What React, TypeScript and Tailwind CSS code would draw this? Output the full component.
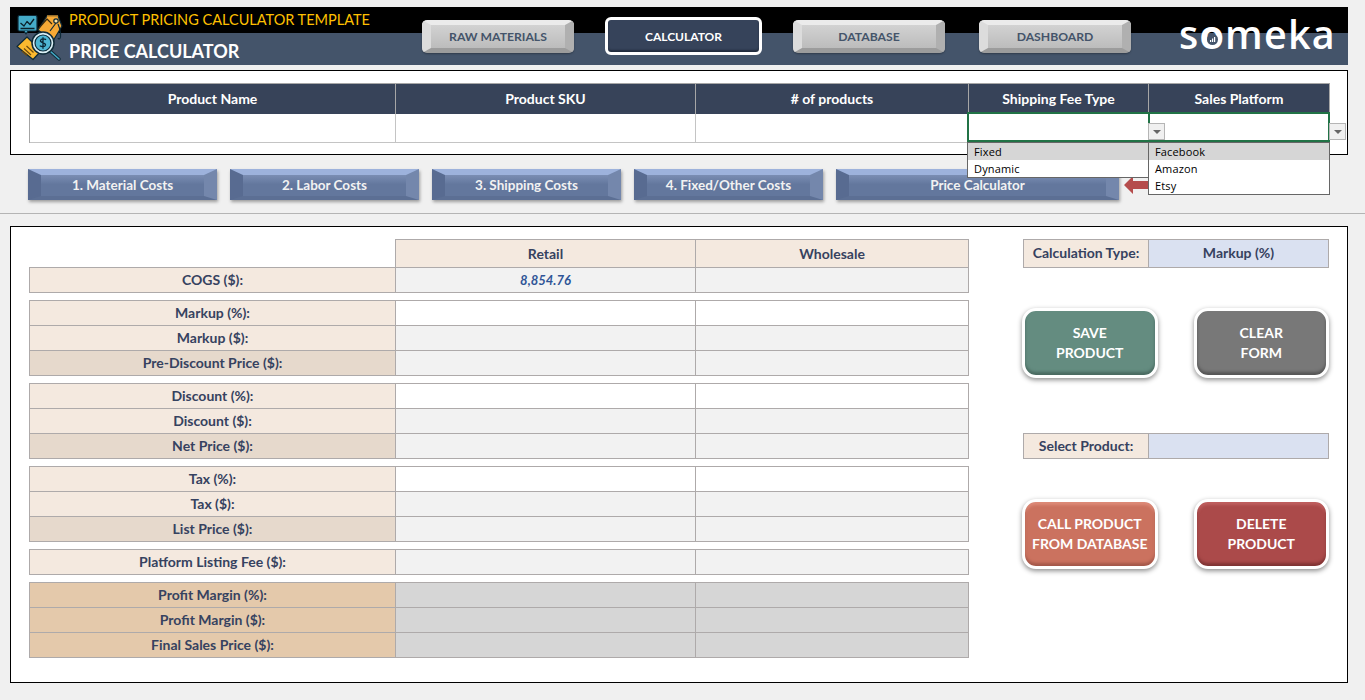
const NAV = [
  { label: "RAW MATERIALS", width: "w-[152px]" },
  { label: "CALCULATOR", active: true },
  { label: "DATABASE", width: "w-[152px]" },
  { label: "DASHBOARD", width: "w-[152px] ml-[3px]" },
];

const COST_BUTTONS = [
  { label: "1. Material Costs", width: "w-[189px]" },
  { label: "2. Labor Costs", width: "w-[189px]" },
  { label: "3. Shipping Costs", width: "w-[189px]" },
  { label: "4. Fixed/Other Costs", width: "w-[189px]" },
  { label: "Price Calculator", width: "w-[283px]" },
];

const TOP_COLUMNS = ["Product Name", "Product SKU", "# of products", "Shipping Fee Type", "Sales Platform"];

const GROUPS = [
  [
    { label: "Markup (%):", input: true },
    { label: "Markup ($):" },
    { label: "Pre-Discount Price ($):", dark: true },
  ],
  [
    { label: "Discount (%):", input: true },
    { label: "Discount ($):" },
    { label: "Net Price ($):", dark: true },
  ],
  [
    { label: "Tax (%):", input: true },
    { label: "Tax ($):" },
    { label: "List Price ($):", dark: true },
  ],
  [{ label: "Platform Listing Fee ($):" }],
];

function PriceIcon() {
  return (
    <svg width="50" height="48" viewBox="14 12 50 48" fill="none" stroke="#0e2a38" strokeWidth="1.200" strokeLinejoin="round">
      <path d="M38 29l9-14h11l4 10-9 15z" fill="#f7a935" />
      <path d="M39 27l8-9 5 5" stroke="#3a2a10" />
      <path d="M47 15l11 0" stroke="#f7a935" />
      <circle cx="56" cy="20" r="2.200" fill="#fde3a7" />
      <path d="M56 22l-6 8M58 23c2 5 3 9 2.500 13-.3 2-2 2.500-2.500 1" />
      <rect x="18" y="14.500" width="19" height="15.500" rx="1.500" fill="#45abc8" />
      <path d="M24 30l2 3 2-3" fill="#45abc8" />
      <path d="M20.500 22l3.500 3 3-4.500 3 3 4-5.500M20.500 27.500h14" stroke="#0b1f28" strokeWidth="1.300" />
      <path d="M17 45.500l10-9.500 14 14-8 8.500z" fill="#fbb92f" />
      <path d="M24 47.500l7 6.500M26.500 45l7 6.500M22 50l5 4.500" stroke="#6f4c0d" />
      <path d="M50 50l9 8" strokeWidth="3.400" strokeLinecap="round" />
      <path d="M50 50l9 8" stroke="#45abc8" strokeWidth="1.500" strokeLinecap="round" />
      <circle cx="43" cy="42" r="11" fill="#d9eef4" strokeWidth="1.500" />
      <circle cx="43" cy="42" r="8" fill="#4eb6d3" />
      <path d="M46 38.800c-1-1-4.800-1.400-5.500.6-.8 2.600 5.600 2 5 4.800-.5 2-4.500 1.600-5.700.4M43 36.300v11.400" stroke="#0b2633" strokeWidth="1.300" />
    </svg>
  );
}

function SomekaLogo() {
  return (
    <div className="relative ml-[48px] -mt-[3px] text-[39.500px] leading-none text-white tracking-[1.200px] [font-family:'Open_Sans',sans-serif] font-semibold">
      s<span className="relative inline-block font-bold">
        o
        <svg className="absolute left-[8px] top-[19px]" width="11" height="11" viewBox="0 0 11 11">
          <circle cx="5.500" cy="5.500" r="5.500" fill="#44546a" />
          <path d="M3 8V6h1.200v2zM5 8V4.500h1.200V8zM7 8V3h1.200v5z" fill="#fff" />
        </svg>
      </span>
      meka
    </div>
  );
}

function NavButton({ label, active, width }: { label: string; active?: boolean; width?: string }) {
  if (active) {
    return (
      <div className="w-[157px] h-[38px] rounded-[6px] border-[3px] border-white bg-[#36435a] shadow-[inset_0_-2px_2px_#222c3d] flex items-center justify-center pt-[1px] text-[12px] font-bold text-white">
        {label}
      </div>
    );
  }
  return (
    <div
      className={`${width} h-[33px] rounded-[5px] border-y-[5px] border-x-[9px] border-t-[#ebebeb] border-b-[#9c9c9c] border-l-[#dcdcdc] border-r-[#b0b0b0] bg-[linear-gradient(#d2d2d2,#bcbcbc)] flex items-center justify-center pt-[2px] text-[12.200px] font-bold text-[#44546a] shadow-[0_1px_2px_rgba(0,0,0,0.3)]`}
    >
      {label}
    </div>
  );
}

function CostButton({ label, width }: { label: string; width: string }) {
  return (
    <div
      className={`${width} h-[31px] border-t-[6px] border-b-[4px] border-x-[13px] border-t-[#9db2dc] border-b-[#5c6f94] border-l-[#586b91] border-r-[#7487ac] bg-[linear-gradient(#7a8db3,#63779d_45%)] flex items-center justify-center text-[13.500px] font-bold text-[#f2f2f2] shadow-[1px_2px_3px_rgba(0,0,0,0.35)]`}
    >
      {label}
    </div>
  );
}

function ActionButton({ lines, className }: { lines: string[]; className: string }) {
  return (
    <div
      className={`w-[136px] h-[70px] rounded-[14px] border-[3px] border-white flex flex-col items-center justify-center text-[14px] leading-[20px] font-bold text-white ${className}`}
    >
      {lines.map((line) => (
        <span key={line}>{line}</span>
      ))}
    </div>
  );
}

function Row({
  label,
  labelBg = "bg-[#f4e9df]",
  retailBg = "bg-[#f2f2f2]",
  retail,
}: {
  label: string;
  labelBg?: string;
  retailBg?: string;
  retail?: string;
}) {
  return (
    <div className="grid grid-cols-[366px_300px_272px] h-[25px] border-b border-[#aeaaaa] last:border-b-0 last:h-[24px] text-[14px] font-bold text-[#364260]">
      <div className={`${labelBg} border-r border-[#aeaaaa] flex items-center justify-center pb-[2px]`}>{label}</div>
      <div className={`${retailBg} border-r border-[#aeaaaa] flex items-center justify-center pt-[1px] italic text-[13px] text-[#2f5597]`}>{retail}</div>
      <div className={retailBg} />
    </div>
  );
}

function Group({ children }: { children: React.ReactNode }) {
  return <div className="w-[940px] border border-[#aeaaaa] mb-[7px]">{children}</div>;
}

function Dropdown({ items, className }: { items: string[]; className: string }) {
  return (
    <div className={`absolute z-10 bg-white border border-[#666666] text-[11px] leading-[17px] tracking-[0.15px] text-black [font-family:'Open_Sans',sans-serif] ${className}`}>
      {items.map((item, i) => (
        <div key={item} className={`h-[17px] pl-[6px] ${i === 0 ? "bg-[#d6d6d6]" : ""}`}>
          {item}
        </div>
      ))}
    </div>
  );
}

function ArrowBox({ className }: { className: string }) {
  return (
    <div className={`absolute z-10 w-[17px] h-[17px] bg-[#f0f0f0] border border-[#b5b5b5] flex items-center justify-center ${className}`}>
      <div className="w-0 h-0 border-x-[4px] border-x-transparent border-t-[4px] border-t-[#666666]" />
    </div>
  );
}

export default function App() {
  return (
    <div className="h-[700px] overflow-hidden bg-[#f0f0f0] pt-[7px] [font-family:Lato,sans-serif]">
      <header className="mx-[10px] w-[1338px] h-[58px] flex items-center bg-[linear-gradient(#000_26px,#44546a_26px)]">
        <div className="ml-[4px] w-[55px] shrink-0 mt-[2px]">
          <PriceIcon />
        </div>
        <div className="w-[353px] shrink-0">
          <div className="text-[14.500px] leading-[26px] text-[#ffc000]">PRODUCT PRICING CALCULATOR TEMPLATE</div>
          <div className="mt-[4px] text-[18px] leading-[28px] font-bold text-white">PRICE CALCULATOR</div>
        </div>
        <div className="flex items-center gap-[31px] mt-[14px] -translate-y-[7px]">
          {NAV.map((n) => (
            <NavButton key={n.label} {...n} />
          ))}
        </div>
        <SomekaLogo />
      </header>

      <section className="relative mx-[10px] mt-[5px] w-[1338px] h-[85px] bg-white border border-black pl-[18px] pt-[12px]">
        <div className="w-[1301px] border border-[#a6a6a6] border-b-0">
          <div className="grid grid-cols-[366px_300px_273px_180px_180px] h-[30px] bg-[#374359] text-[14px] font-bold text-white">
            {TOP_COLUMNS.map((c) => (
              <div key={c} className="flex items-center justify-center pb-[2px] border-r border-[#a6a6a6] last:border-r-0">
                {c}
              </div>
            ))}
          </div>
          <div className="grid grid-cols-[366px_300px_273px_360px] h-[29px] bg-white">
            <div className="border-r border-b border-[#c4c4c4]" />
            <div className="border-r border-b border-[#c4c4c4]" />
            <div className="border-b border-[#c4c4c4]" />
            <div />
          </div>
        </div>
        {/* selected cells */}
        <div className="absolute left-[956px] top-[41px] w-[363px] h-[30px] border-2 border-[#217346]">
          <div className="w-[2px] h-full ml-[179px] bg-[#217346]" />
        </div>
        <ArrowBox className="left-[1137px] top-[52px]" />
        <ArrowBox className="left-[1318px] top-[52px]" />
        <Dropdown items={["Fixed", "Dynamic"]} className="left-[956px] top-[71px] w-[182px] h-[36px]" />
        <Dropdown items={["Facebook", "Amazon", "Etsy"]} className="left-[1137px] top-[71px] w-[182px] h-[53px]" />
      </section>

      <div className="flex items-center ml-[28px] mt-[14px] h-[31px]">
        <div className="flex gap-[13px]">
          {COST_BUTTONS.map((b) => (
            <CostButton key={b.label} {...b} />
          ))}
        </div>
        <svg className="ml-[5px]" width="26" height="18" viewBox="0 0 26 18">
          <path d="M0 9l9-9v5h17v8H9v5z" fill="#b54c4c" />
        </svg>
      </div>

      <div className="mt-[13px] h-px bg-[#b4b4b4]" />

      <main className="mx-[10px] mt-[12px] w-[1338px] h-[457px] bg-white border border-black pl-[18px] pt-[12px] flex">
        <div>
          <div className="grid grid-cols-[366px_301px_273px] w-[940px] h-[28px] text-[14px] font-bold text-[#364260]">
            <div />
            <div className="bg-[#f4e9df] border border-b-0 border-[#aeaaaa] flex items-center justify-center">Retail</div>
            <div className="bg-[#f4e9df] border-t border-r border-[#aeaaaa] flex items-center justify-center">Wholesale</div>
          </div>
          <Group>
            <Row label="COGS ($):" retail="8,854.76" />
          </Group>
          {GROUPS.map((rows) => (
            <Group key={rows[0].label}>
              {rows.map((r) => (
                <Row
                  key={r.label}
                  label={r.label}
                  labelBg={r.dark ? "bg-[#e6d9cc]" : "bg-[#f4e9df]"}
                  retailBg={r.input ? "bg-white" : "bg-[#f2f2f2]"}
                />
              ))}
            </Group>
          ))}
          <Group>
            {["Profit Margin (%):", "Profit Margin ($):", "Final Sales Price ($):"].map((label) => (
              <Row key={label} label={label} labelBg="bg-[#e4c9ab]" retailBg="bg-[#d6d6d6]" />
            ))}
          </Group>
        </div>

        <aside className="ml-[54px] w-[306px] text-[14px] font-bold text-[#364260]">
          <div className="grid grid-cols-[125px_179px] h-[29px] border border-[#aeaaaa]">
            <div className="bg-[#f4e9df] border-r border-[#aeaaaa] flex items-center justify-center pb-[2px]">Calculation Type:</div>
            <div className="bg-[#dae1f1] flex items-center justify-center pb-[2px]">Markup (%)</div>
          </div>
          <div className="flex gap-[36px] -ml-px mt-[40px]">
            <ActionButton lines={["SAVE", "PRODUCT"]} className="bg-[#648c80] shadow-[0_2px_5px_rgba(0,0,0,0.45),inset_0_-3px_3px_#4a6a60]" />
            <ActionButton lines={["CLEAR", "FORM"]} className="bg-[#787878] shadow-[0_2px_5px_rgba(0,0,0,0.45),inset_0_-3px_3px_#555555]" />
          </div>
          <div className="grid grid-cols-[125px_179px] h-[26px] border border-[#aeaaaa] mt-[55px]">
            <div className="bg-[#f4e9df] border-r border-[#aeaaaa] flex items-center justify-center pb-[2px]">Select Product:</div>
            <div className="bg-[#dae1f1]" />
          </div>
          <div className="flex gap-[36px] -ml-px mt-[40px]">
            <ActionButton lines={["CALL PRODUCT", "FROM DATABASE"]} className="bg-[#cb725f] shadow-[0_2px_5px_rgba(0,0,0,0.45),inset_0_-3px_3px_#a4584a,inset_0_3px_3px_#dd8a78]" />
            <ActionButton lines={["DELETE", "PRODUCT"]} className="bg-[#ab4a4a] shadow-[0_2px_5px_rgba(0,0,0,0.45),inset_0_-3px_3px_#7f3434,inset_0_3px_3px_#bf5f5f]" />
          </div>
        </aside>
      </main>
    </div>
  );
}
